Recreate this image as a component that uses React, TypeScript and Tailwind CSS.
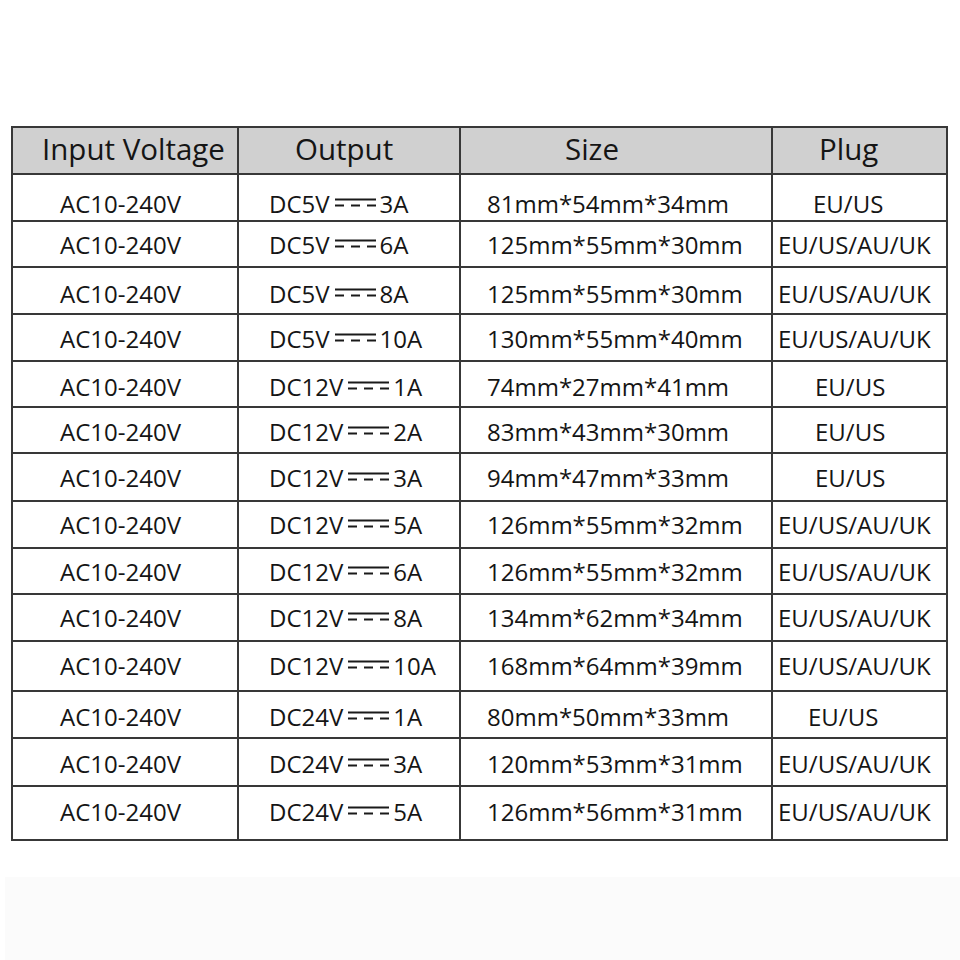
import React from 'react';

type Row = {
  volts: string;
  amps: string;
  size: string;
  plug: string;
  h: string;
  pad: string;
  plugPad: string;
};

const rows: Row[] = [
  { volts: 'DC5V', amps: '3A', size: '81mm*54mm*34mm', plug: 'EU/US', h: 'h-[47px]', pad: 'pt-[12px]', plugPad: 'pl-[40px]' },
  { volts: 'DC5V', amps: '6A', size: '125mm*55mm*30mm', plug: 'EU/US/AU/UK', h: 'h-[46px]', pad: 'pt-[2px]', plugPad: 'pl-[5px]' },
  { volts: 'DC5V', amps: '8A', size: '125mm*55mm*30mm', plug: 'EU/US/AU/UK', h: 'h-[47px]', pad: 'pt-[6px]', plugPad: 'pl-[5px]' },
  { volts: 'DC5V', amps: '10A', size: '130mm*55mm*40mm', plug: 'EU/US/AU/UK', h: 'h-[47px]', pad: 'pt-[2px]', plugPad: 'pl-[5px]' },
  { volts: 'DC12V', amps: '1A', size: '74mm*27mm*41mm', plug: 'EU/US', h: 'h-[46px]', pad: 'pt-[6px]', plugPad: 'pl-[42px]' },
  { volts: 'DC12V', amps: '2A', size: '83mm*43mm*30mm', plug: 'EU/US', h: 'h-[46px]', pad: 'pt-[4px]', plugPad: 'pl-[42px]' },
  { volts: 'DC12V', amps: '3A', size: '94mm*47mm*33mm', plug: 'EU/US', h: 'h-[48px]', pad: 'pt-[2px]', plugPad: 'pl-[42px]' },
  { volts: 'DC12V', amps: '5A', size: '126mm*55mm*32mm', plug: 'EU/US/AU/UK', h: 'h-[47px]', pad: 'pt-0', plugPad: 'pl-[5px]' },
  { volts: 'DC12V', amps: '6A', size: '126mm*55mm*32mm', plug: 'EU/US/AU/UK', h: 'h-[46px]', pad: 'pt-[2px]', plugPad: 'pl-[5px]' },
  { volts: 'DC12V', amps: '8A', size: '134mm*62mm*34mm', plug: 'EU/US/AU/UK', h: 'h-[47px]', pad: 'pt-0', plugPad: 'pl-[5px]' },
  { volts: 'DC12V', amps: '10A', size: '168mm*64mm*39mm', plug: 'EU/US/AU/UK', h: 'h-[50px]', pad: 'pt-0', plugPad: 'pl-[5px]' },
  { volts: 'DC24V', amps: '1A', size: '80mm*50mm*33mm', plug: 'EU/US', h: 'h-[47px]', pad: 'pt-[4px]', plugPad: 'pl-[35px]' },
  { volts: 'DC24V', amps: '3A', size: '120mm*53mm*31mm', plug: 'EU/US/AU/UK', h: 'h-[48px]', pad: 'pt-[4px]', plugPad: 'pl-[5px]' },
  { volts: 'DC24V', amps: '5A', size: '126mm*56mm*31mm', plug: 'EU/US/AU/UK', h: 'h-[54px]', pad: 'pb-[2px]', plugPad: 'pl-[5px]' },
];

// direct current sign: solid bar over three dashes
function DcSign() {
  return (
    <svg width="41" height="16" viewBox="0 0 41 16" className="inline-block align-baseline ml-[5px] mr-[4px]">
      <line x1="0" y1="2.5" x2="41" y2="2.5" stroke="#1a1a1a" strokeWidth="2" />
      <line x1="0" y1="8.5" x2="41" y2="8.5" stroke="#1a1a1a" strokeWidth="2" strokeDasharray="9 7" />
    </svg>
  );
}

const cell = 'border-r-2 border-b-2 border-[#383838] flex items-center';

export default function App() {
  return (
    <div
      className="w-[960px] h-[960px] bg-white text-[#151515] overflow-hidden"
      style={{ fontFamily: '"Open Sans", "Noto Sans", sans-serif' }}
    >
      <div className="pt-[126px] pl-[11px]">
        <div className="w-[937px] border-l-2 border-t-2 border-[#383838]">
          {/* Header */}
          <div className="grid grid-cols-[226px_222px_312px_175px] h-[47px] bg-[#d0d0d0] text-[29.5px] leading-none">
            <div className={`${cell} pl-[29px] pb-[3px]`}>Input Voltage</div>
            <div className={`${cell} pl-[56px] pb-[3px]`}>Output</div>
            <div className={`${cell} pl-[104px] pb-[3px]`}>Size</div>
            <div className={`${cell} pl-[46px] pb-[3px]`}>Plug</div>
          </div>

          {/* Body */}
          {rows.map((r, i) => (
            <div key={i} className={`grid grid-cols-[226px_222px_312px_175px] ${r.h} text-[24px] leading-none`}>
              <div className={`${cell} pl-[47px] ${r.pad}`}>AC10-240V</div>
              <div className={`${cell} pl-[30px] ${r.pad}`}>
                <span className="whitespace-nowrap">
                  {r.volts}
                  <DcSign />
                  {r.amps}
                </span>
              </div>
              <div className={`${cell} pl-[26px] ${r.pad}`}>{r.size}</div>
              <div className={`${cell} ${r.plugPad} ${r.pad} whitespace-nowrap`}>{r.plug}</div>
            </div>
          ))}
        </div>
      </div>
      <div className="mt-[36px] ml-[5px] h-[90px] bg-[#fbfbfb]" />
    </div>
  );
}
